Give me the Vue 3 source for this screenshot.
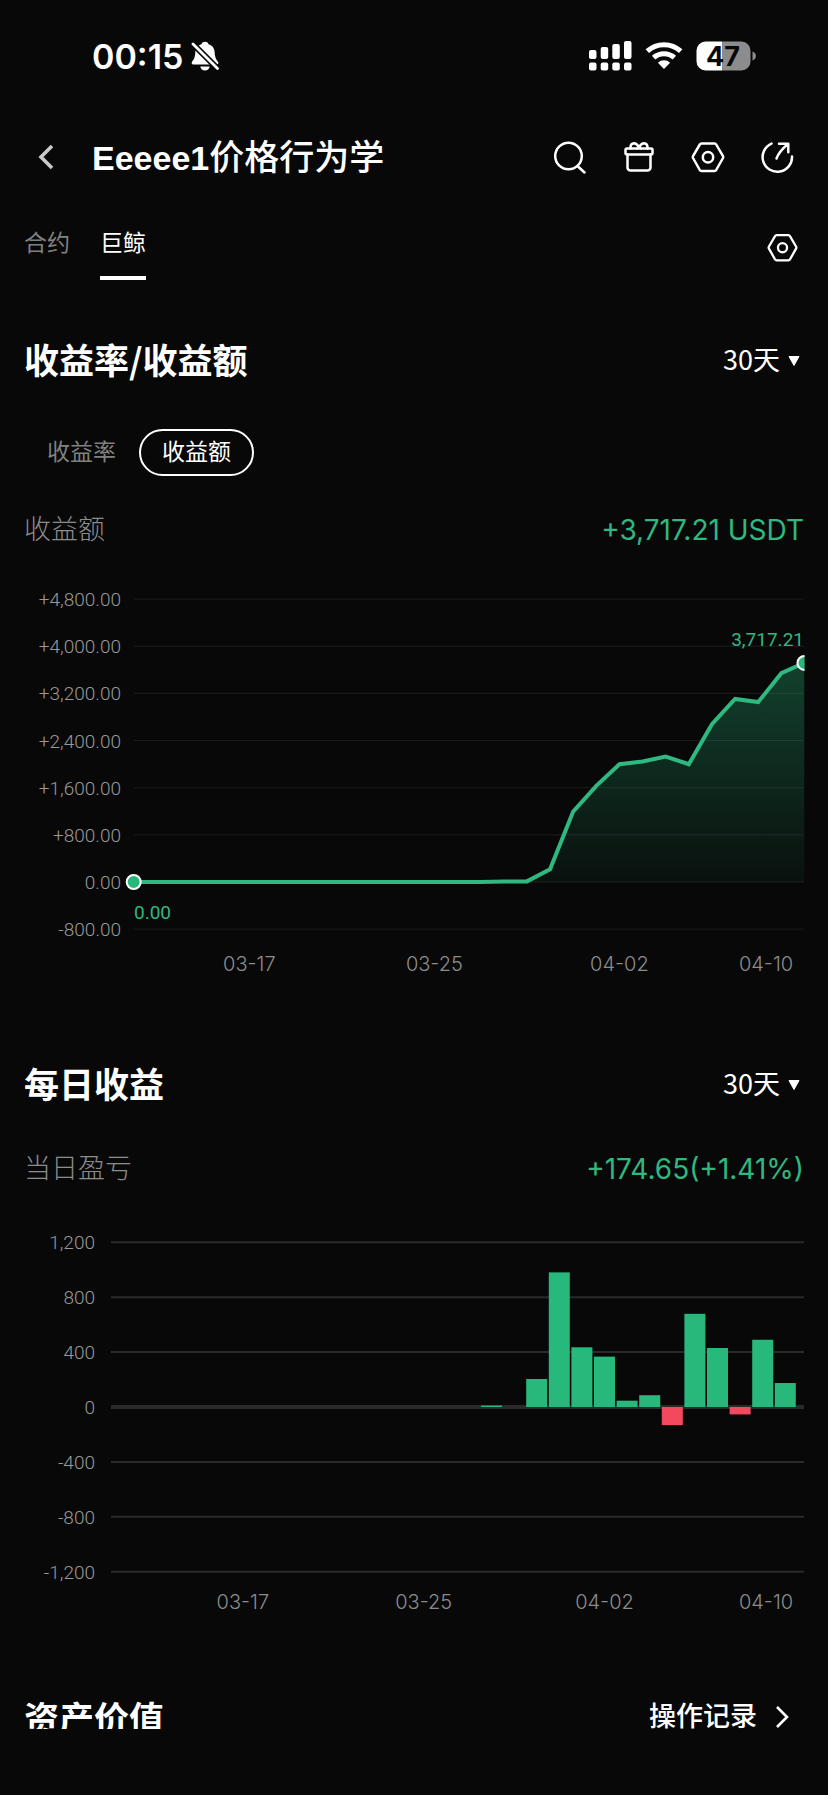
<template>
  <div class="page">
    <div class="status-bar">
      <div class="status-left">
        <span class="clock">00:15</span>
        <svg class="bell" width="28" height="30" viewBox="0 0 28 30" aria-hidden="true">
          <path d="M14 .8c1.700 0 3 .8 3.500 2.400 4 1.200 6 4.200 6.200 8.200.2 4.800 1.300 6.600 3.300 9.300.9 1.200.2 2.800-1.200 2.800H2.200c-1.400 0-2.100-1.600-1.200-2.800C3 18 4.100 16.200 4.300 11.400c.2-4 2.200-7 6.200-8.200C11 1.600 12.300.8 14 .8z" fill="#fff" />
          <path d="M9.300 25.500h9.400c-.5 2.600-2.200 4-4.700 4s-4.200-1.400-4.700-4z" fill="#fff" />
          <path d="M1 2 27 28" stroke="#080808" stroke-width="6" />
          <path d="M2 3 26.500 27.500" stroke="#fff" stroke-width="2.800" stroke-linecap="round" />
        </svg>
      </div>
      <div class="status-right">
        <svg width="43" height="30" viewBox="0 0 43 30" fill="#fff" aria-hidden="true">
          <rect x="0" y="9" width="7.500" height="9" rx="2" />
          <rect x="11.700" y="6" width="7.500" height="12" rx="2" />
          <rect x="23.300" y="3" width="7.500" height="15" rx="2" />
          <rect x="35" y="0" width="7.500" height="18" rx="2" />
          <rect x="0" y="21.500" width="7.500" height="8" rx="2" />
          <rect x="11.700" y="21.500" width="7.500" height="8" rx="2" />
          <rect x="23.300" y="21.500" width="7.500" height="8" rx="2" />
          <rect x="35" y="21.500" width="7.500" height="8" rx="2" />
        </svg>
        <svg width="38" height="28" viewBox="0 0 38 28" aria-hidden="true">
          <g fill="none" stroke="#fff" stroke-width="5">
            <path d="M2.300 9.200a24.500 24.500 0 0 1 33.400 0" />
            <path d="M8.600 15.700a15.500 15.500 0 0 1 20.800 0" />
          </g>
          <path d="M12.900 20.700a9 9 0 0 1 12.200 0L19 27z" fill="#fff" />
        </svg>
        <svg width="61" height="30" viewBox="0 0 61 30" role="img" aria-label="47%">
          <path d="M9.500.5H26v29H9.500a9 9 0 0 1-9-9v-11a9 9 0 0 1 9-9z" fill="#fff" />
          <path d="M26 .5h19.500a9 9 0 0 1 9 9v11a9 9 0 0 1-9 9H26z" fill="#8c8c8c" />
          <path d="M56.500 10.500c4.500 1 4.500 8 0 9z" fill="#8c8c8c" />
          <text class="battery-text" x="27" y="25" text-anchor="middle">47</text>
        </svg>
      </div>
    </div>

    <header class="header">
      <button class="icon-button back" aria-label="返回">
        <svg width="18" height="26" viewBox="0 0 18 26"><path d="M15 2 4 13l11 11" fill="none" stroke="#c8cacc" stroke-width="3.600" /></svg>
      </button>
      <h1>Eeeee1<span>价格行为学</span></h1>
      <div class="actions">
        <button class="icon-button" aria-label="搜索">
          <svg width="34" height="34" viewBox="0 0 34 34" class="line-icon">
            <circle cx="15.500" cy="16" r="13.300" />
            <path d="m25 26.500 6.500 6" />
          </svg>
        </button>
        <button class="icon-button" aria-label="礼物">
          <svg width="34" height="34" viewBox="0 0 34 34" class="line-icon">
            <rect x="3.500" y="8.500" width="27" height="6" rx="1.500" />
            <path d="M5.500 14.500v13a3 3 0 0 0 3 3h17a3 3 0 0 0 3-3v-13" />
            <path d="M8.500 8.500V7a3.800 3.800 0 0 1 3.500-3.700c2.500 0 4 2.200 5 4.200 1-2 2.500-4.200 5-4.200A3.800 3.800 0 0 1 25.500 7v1.500M17 7.500l-2 1M17 7.500l2 1" />
          </svg>
        </button>
        <button class="icon-button" aria-label="设置">
          <svg width="34" height="34" viewBox="0 0 34 34" class="line-icon">
            <path d="M10.500 3.500h13a2 2 0 0 1 1.700 1L32 16.200a2 2 0 0 1 0 1.800l-6.800 12a2 2 0 0 1-1.700 1h-13a2 2 0 0 1-1.700-1L2 18a2 2 0 0 1 0-1.800L8.800 4.500a2 2 0 0 1 1.700-1z" />
            <circle cx="17" cy="17.200" r="5.200" />
          </svg>
        </button>
        <button class="icon-button" aria-label="分享">
          <svg width="34" height="34" viewBox="0 0 34 34" class="line-icon">
            <path d="M11.500 3.600A14.700 14.700 0 1 0 32 16.500" />
            <path d="M16.500 18.500C18.500 13 22 9 27.500 4.500M19 3.800h9.300v8.500" />
          </svg>
        </button>
      </div>
    </header>

    <nav class="tabs">
      <button
        v-for="tab in tabs"
        :key="tab"
        class="tab"
        :class="{ active: tab === activeTab }"
        @click="activeTab = tab"
      >{{ tab }}</button>
      <button class="icon-button tab-settings" aria-label="设置">
        <svg width="31" height="31" viewBox="0 0 34 34" class="line-icon">
          <path d="M10.500 3.500h13a2 2 0 0 1 1.700 1L32 16.200a2 2 0 0 1 0 1.800l-6.800 12a2 2 0 0 1-1.700 1h-13a2 2 0 0 1-1.700-1L2 18a2 2 0 0 1 0-1.800L8.800 4.500a2 2 0 0 1 1.700-1z" />
          <circle cx="17" cy="17.200" r="5" />
        </svg>
      </button>
    </nav>

    <section class="total">
      <div class="section-head">
        <h2>收益率/收益额</h2>
        <label class="period">
          <select v-model="totalPeriod" aria-label="收益周期">
            <option>30天</option>
          </select>
          <svg width="12" height="10" viewBox="0 0 12 10"><path d="M1 .5h10L6 9.500z" fill="#fff" stroke="#fff" stroke-linejoin="round" /></svg>
        </label>
      </div>
      <div class="pills">
        <button
          v-for="m in metrics"
          :key="m"
          class="pill"
          :class="{ active: m === metric }"
          @click="metric = m"
        >{{ m }}</button>
      </div>
      <div class="summary">
        <span class="label">{{ metric }}</span>
        <span class="value">+3,717.21 USDT</span>
      </div>
      <svg class="chart" viewBox="0 0 828 430">
        <defs>
          <linearGradient id="area" x1="0" y1="0" x2="0" y2="1">
            <stop offset="0" stop-color="#27b97c" stop-opacity="0.320" />
            <stop offset="1" stop-color="#27b97c" stop-opacity="0.050" />
          </linearGradient>
          <clipPath id="plot"><rect x="120" y="0" width="684.500" height="400" /></clipPath>
        </defs>
        <g v-for="t in totalTicks" :key="t">
          <line x1="134" x2="804" :y1="totalY(t)" :y2="totalY(t)" class="grid" />
          <text x="121" :y="totalY(t) + 7" class="axis" text-anchor="end">{{ totalLabel(t) }}</text>
        </g>
        <g clip-path="url(#plot)">
          <polygon :points="areaPoints" fill="url(#area)" />
          <polyline :points="linePoints" class="line" />
          <circle :cx="totalX(0)" :cy="totalY(0)" r="7" class="dot" />
          <circle :cx="totalX(29)" :cy="totalY(totals[29])" r="7" class="dot" />
        </g>
        <text x="134" y="369" class="point">0.00</text>
        <text x="804" y="96" class="point" text-anchor="end">3,717.21</text>
        <text v-for="d in dates" :key="d.text" :x="Math.min(totalX(d.index), 766)" y="421" class="date">{{ d.text }}</text>
      </svg>
    </section>

    <section class="daily">
      <div class="section-head">
        <h2>每日收益</h2>
        <label class="period">
          <select v-model="dailyPeriod" aria-label="每日收益周期">
            <option>30天</option>
          </select>
          <svg width="12" height="10" viewBox="0 0 12 10"><path d="M1 .5h10L6 9.500z" fill="#fff" stroke="#fff" stroke-linejoin="round" /></svg>
        </label>
      </div>
      <div class="summary">
        <span class="label">当日盈亏</span>
        <span class="value">+174.65(+1.41%)</span>
      </div>
      <svg class="chart" viewBox="0 0 828 431">
        <g v-for="t in dailyTicks" :key="t">
          <line x1="111" x2="804" :y1="dailyY(t)" :y2="dailyY(t)" class="grid-strong" :class="{ zero: t === 0 }" />
          <text x="95" :y="dailyY(t) + 7" class="axis" text-anchor="end">{{ t.toLocaleString('en-US') }}</text>
        </g>
        <rect
          v-for="bar in bars"
          :key="bar.index"
          :x="dailyX(bar.index) - 10.5"
          :y="dailyY(Math.max(bar.value, 0))"
          width="21"
          :height="Math.abs(dailyY(bar.value) - dailyY(0))"
          :class="bar.value > 0 ? 'up' : 'down'"
        />
        <text v-for="d in dates" :key="d.text" :x="Math.min(dailyX(d.index), 766)" y="420" class="date">{{ d.text }}</text>
      </svg>
    </section>

    <section class="assets">
      <div class="section-head">
        <h2>资产价值</h2>
        <a href="#" class="records">
          操作记录
          <svg width="14" height="24" viewBox="0 0 14 24"><path d="m2 2 10 10L2 22" fill="none" stroke="#fff" stroke-width="2.600" /></svg>
        </a>
      </div>
    </section>
  </div>
</template>

<script setup>
import { ref, computed } from 'vue';

const tabs = ['合约', '巨鲸'];
const activeTab = ref('巨鲸');
const metrics = ['收益率', '收益额'];
const metric = ref('收益额');
const totalPeriod = ref('30天');
const dailyPeriod = ref('30天');

// 30 days of profit, 03-12 to 04-10
const daily = [
  0, 0, 0, 0, 0, 0, 0, 0, 0, 0, 0, 0, 0, 0, 0, 0, 10.56, 0,
  204, 981, 435, 367, 46, 86, -132, 679, 430, -54, 490, 174.65
];

const dates = [
  { text: '03-17', index: 5 },
  { text: '03-25', index: 13 },
  { text: '04-02', index: 21 },
  { text: '04-10', index: 29 }
];

const totalTicks = [4800, 4000, 3200, 2400, 1600, 800, 0, -800];
const dailyTicks = [1200, 800, 400, 0, -400, -800, -1200];

const totals = computed(() => {
  let sum = 0;
  return daily.map((v) => (sum += v));
});

const bars = computed(() => daily.map((value, index) => ({ value, index })).filter((b) => b.value !== 0));

// chart scales
function totalX(index) {
  return 133.7 + index * 23.13;
}

function totalY(value) {
  return 332 - (value / 800) * 47.15;
}

function dailyX(index) {
  return 129.9 + index * 22.6;
}

function dailyY(value) {
  return 218 - (value / 400) * 54.9;
}

function totalLabel(value) {
  const text = value.toLocaleString('en-US', { minimumFractionDigits: 2 });
  return value > 0 ? '+' + text : text;
}

const linePoints = computed(() => totals.value.map((v, i) => `${totalX(i)},${totalY(v)}`).join(' '));

const areaPoints = computed(() => `${totalX(0)},${totalY(0)} ${linePoints.value} ${totalX(29)},${totalY(0)}`);
</script>

<style>
body {
  background: #080808;
}
</style>

<style scoped>
.page {
  min-height: 100vh;
  box-sizing: border-box;
  background: #080808;
  color: #fff;
  font-family: Inter, "Noto Sans CJK SC", sans-serif;
}

button,
select {
  font-family: inherit;
  background: none;
  border: none;
  padding: 0;
  margin: 0;
  color: inherit;
  cursor: pointer;
}

.status-bar {
  display: flex;
  justify-content: space-between;
  align-items: center;
  height: 112px;
  padding: 0 71px 0 92px;
}

.status-left {
  display: flex;
  align-items: center;
  gap: 8px;
}

.clock {
  font-size: 34px;
  font-weight: 600;
}

.status-right {
  display: flex;
  align-items: center;
  gap: 13px;
}

.battery-text {
  font-size: 27px;
  font-weight: 700;
  fill: #080808;
}

.header {
  display: flex;
  align-items: center;
  height: 90px;
  padding: 0 31px 0 26px;
}

.icon-button {
  display: flex;
  align-items: center;
  justify-content: center;
  width: 40px;
  height: 42px;
}

.line-icon {
  fill: none;
  stroke: #fff;
  stroke-width: 2.5;
  stroke-linecap: round;
  stroke-linejoin: round;
}

h1 {
  flex: 1;
  margin: 0 0 0 26px;
  padding-top: 2px;
  font-family: "Liberation Sans", "Noto Sans CJK SC", sans-serif;
  font-size: 34px;
  line-height: 48px;
  font-weight: 700;
}

h1 span {
  font-size: 35px;
  font-weight: 500;
}

.actions {
  display: flex;
  gap: 29px;
}

.tabs {
  display: flex;
  align-items: flex-start;
  gap: 30px;
  padding: 24px 24px 0;
}

.tab {
  padding-bottom: 16px;
  border-bottom: 4px solid transparent;
  font-size: 23px;
  line-height: 34px;
  color: #808080;
}

.tab.active {
  color: #fff;
  border-bottom-color: #fff;
}

.tab-settings {
  width: 44px;
  margin-left: auto;
}

.section-head,
.summary {
  display: flex;
  align-items: center;
  justify-content: space-between;
  padding: 0 24px;
}

h2 {
  margin: 0;
  font-family: "Noto Sans CJK SC", sans-serif;
  font-size: 35px;
  line-height: 48px;
  font-weight: 700;
}

.period {
  display: flex;
  align-items: center;
  gap: 8px;
  padding-right: 4px;
}

.period select {
  appearance: none;
  font-family: "Noto Sans CJK SC", sans-serif;
  font-size: 27px;
  line-height: 40px;
}

.period svg {
  margin-top: 4px;
}

.total {
  padding-top: 55px;
}

.pills {
  display: flex;
  padding: 46px 24px 34px;
}

.pill {
  padding: 0 21px;
  border: 2px solid transparent;
  border-radius: 24px;
  font-size: 23px;
  line-height: 43px;
  color: #808080;
}

.pill.active {
  color: #fff;
  border-color: #fff;
}

.summary {
  height: 40px;
  line-height: 42px;
}

.label {
  font-size: 27px;
  font-weight: 300;
  color: #8c8c8c;
}

.value {
  font-size: 28px;
  color: #2fb880;
}

.chart {
  display: block;
  width: 100%;
}

.grid {
  stroke: #1c1c1c;
  stroke-width: 1;
}

.grid-strong {
  stroke: #2a2a2a;
  stroke-width: 2;
}

.grid-strong.zero {
  stroke-width: 4;
}

.axis {
  font-family: Roboto, sans-serif;
  font-size: 19px;
  font-weight: 300;
  fill: #999;
}

.date {
  font-size: 20px;
  font-weight: 300;
  fill: #8c8c8c;
  text-anchor: middle;
}

.point {
  font-family: Roboto, sans-serif;
  font-size: 19px;
  fill: #2fb880;
}

.line {
  fill: none;
  stroke: #2fb880;
  stroke-width: 4;
}

.dot {
  fill: #27b97c;
  stroke: #fff;
  stroke-width: 2;
}

.up {
  fill: #27b97c;
}

.down {
  fill: #f2495f;
}

.daily {
  padding-top: 79px;
}

.daily .summary {
  padding-top: 42px;
}

.assets {
  padding-top: 73px;
}

.assets .section-head {
  height: 36px;
  align-items: flex-start;
  overflow: hidden;
}

.records {
  display: flex;
  align-items: center;
  gap: 18px;
  padding-right: 15px;
  font-size: 27px;
  line-height: 48px;
  font-weight: 500;
  color: #fff;
  text-decoration: none;
}
</style>
